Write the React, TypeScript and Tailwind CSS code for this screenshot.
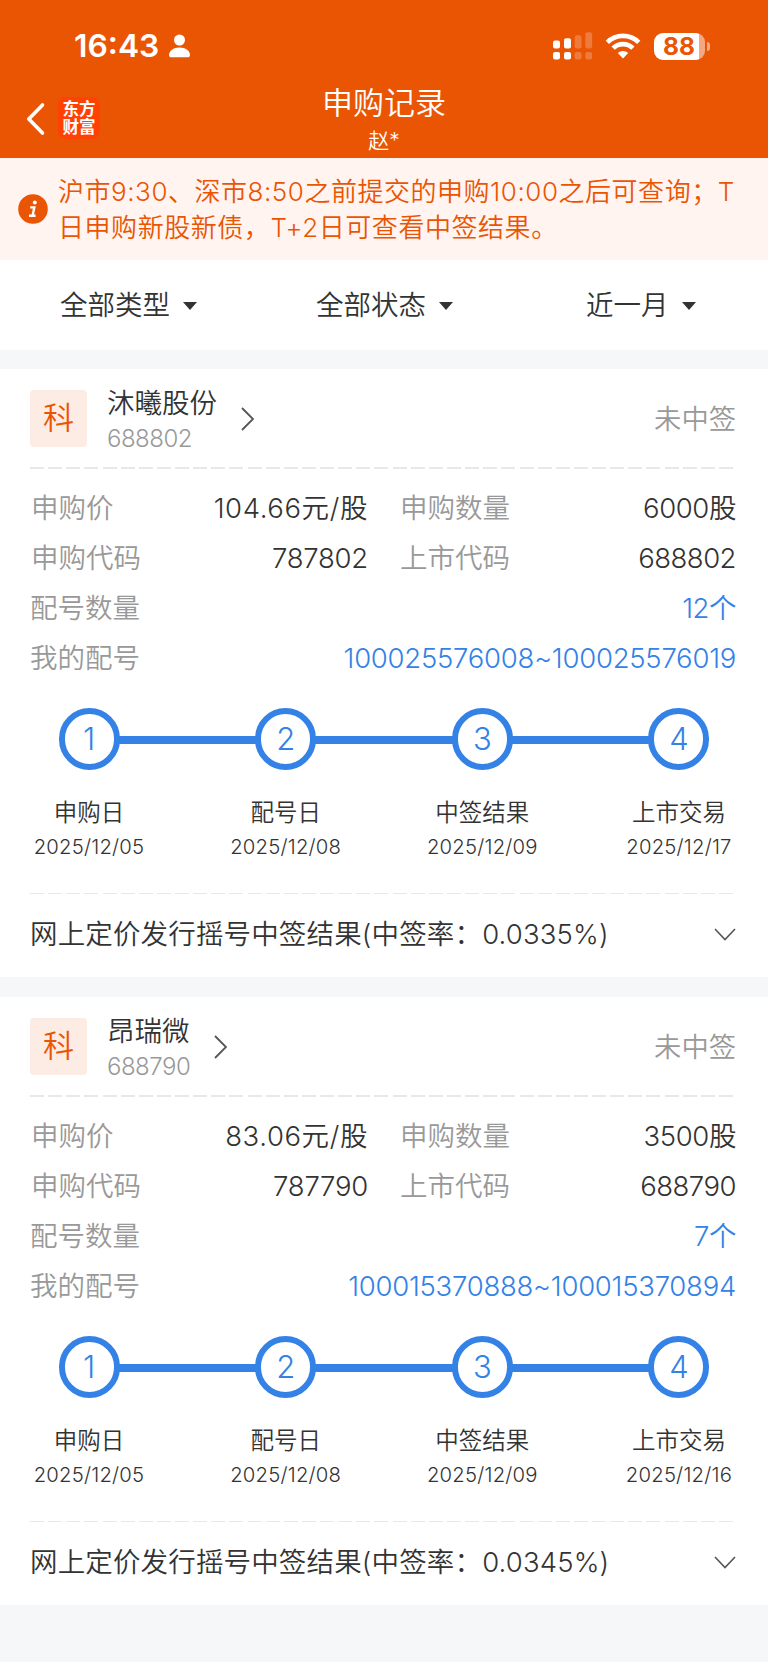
import clsx from 'clsx';

interface Step {
  label: string;
  date: string;
}

interface Subscription {
  name: string;
  code: string;
  price: string;
  quantity: string;
  applyCode: string;
  lotCount: string;
  lots: string;
  rate: string;
  steps: Step[];
}

const subscriptions: Subscription[] = [
  {
    name: '沐曦股份',
    code: '688802',
    price: '104.66元/股',
    quantity: '6000股',
    applyCode: '787802',
    lotCount: '12个',
    lots: '100025576008~100025576019',
    rate: '0.0335%',
    steps: [
      { label: '申购日', date: '2025/12/05' },
      { label: '配号日', date: '2025/12/08' },
      { label: '中签结果', date: '2025/12/09' },
      { label: '上市交易', date: '2025/12/17' },
    ],
  },
  {
    name: '昂瑞微',
    code: '688790',
    price: '83.06元/股',
    quantity: '3500股',
    applyCode: '787790',
    lotCount: '7个',
    lots: '100015370888~100015370894',
    rate: '0.0345%',
    steps: [
      { label: '申购日', date: '2025/12/05' },
      { label: '配号日', date: '2025/12/08' },
      { label: '中签结果', date: '2025/12/09' },
      { label: '上市交易', date: '2025/12/16' },
    ],
  },
];

function StatusBar() {
  return (
    <div className="flex h-[92px] items-center pl-[74px] text-white">
      <span className="w-[95px] text-[31.8px] leading-[94px] font-semibold">16:43</span>
      <svg width="22" height="24" viewBox="0 0 22 24" fill="currentColor">
        <circle cx="10.5" cy="6" r="5.5" />
        <path d="M0 21C0 17 4.5 13.5 10.5 13.5S21 17 21 21C21 22.5 20 23.3 18.5 23.3H2.5C1 23.3 0 22.5 0 21Z" />
      </svg>
      <svg className="ml-[362px]" width="40" height="28" viewBox="0 0 40 28" fill="currentColor">
        <rect x="0" y="8.5" width="7" height="8" rx="2" />
        <rect x="11" y="6.3" width="7" height="10.2" rx="2" />
        <rect x="0" y="20" width="7" height="7.5" rx="2" />
        <rect x="11" y="20" width="7" height="7.5" rx="2" />
        <g opacity="0.22">
          <rect x="21.7" y="3.3" width="6.8" height="13.2" rx="2" />
          <rect x="32.3" y="0.3" width="6.8" height="16.2" rx="2" />
          <rect x="21.7" y="20" width="6.8" height="7.5" rx="2" />
          <rect x="32.3" y="20" width="6.8" height="7.5" rx="2" />
        </g>
      </svg>
      <svg className="ml-[12px]" width="36" height="26" viewBox="0 0 36 26" fill="none" stroke="currentColor" strokeWidth="4.6">
        <path d="M2.3 9.3C11 0.7 25 0.7 33.7 9.3" />
        <path d="M8.1 15.2C13.6 9.7 22.4 9.7 27.9 15.2" />
        <path d="M18 25.5L12.8 20.1C15.6 17.3 20.4 17.3 23.2 20.1Z" fill="currentColor" stroke="none" />
      </svg>
      <div className="ml-[13px] flex h-[27px] w-[51px] items-center rounded-[9px] bg-[linear-gradient(90deg,#fff_45px,#f4a781_45px)]">
        <span className="w-[50px] text-center text-[24.5px] leading-[31px] font-bold text-[#ea5504]">88</span>
      </div>
      <div className="ml-[2px] h-[9px] w-[3px] rounded-r-full bg-[#f4a781]" />
    </div>
  );
}

function Header() {
  return (
    <header className="relative h-[158px] bg-[#ea5504] text-white">
      <StatusBar />
      <div className="absolute top-[97px] left-[26px] flex items-center">
        <svg className="mt-[2px]" width="20" height="34" viewBox="0 0 20 34" fill="none" stroke="currentColor" strokeWidth="3.6" strokeLinecap="round" strokeLinejoin="round">
          <path d="M16.5 3L2.8 17L16.5 31" />
        </svg>
        <div className="ml-[12px] flex h-[42px] w-[42px] flex-col items-center justify-center rounded-lg bg-[#ff4203] text-[16.5px] leading-[18px] font-bold">
          <span>东方</span>
          <span>财富</span>
        </div>
      </div>
      <div className="flex flex-col items-center">
        <h1 className="-mt-[9px] text-[31px] leading-[40px] font-[350]">申购记录</h1>
        <p className="mt-[4px] text-[21px] leading-[28px] font-[350]">赵*</p>
      </div>
    </header>
  );
}

function Notice() {
  return (
    <div className="flex h-[102px] items-center bg-[#fff4ef] pl-[18px] text-[#ea5504]">
      <svg width="30" height="30" viewBox="0 0 30 30">
        <circle cx="15" cy="15" r="14.8" fill="#ea5504" />
        <circle cx="16.8" cy="8.6" r="2" fill="#fff" />
        <path d="M12.2 13.4H16.3L14.6 21.4M11 21.8H17.6" fill="none" stroke="#fff" strokeWidth="2.4" />
      </svg>
      <div className="mt-[2px] ml-[10px] text-[26px] leading-[36px] font-[350] whitespace-nowrap">
        <p className="tracking-[0.53px]">沪市9:30、深市8:50之前提交的申购10:00之后可查询；T</p>
        <p className="tracking-[0.55px]">日申购新股新债，T+2日可查看中签结果。</p>
      </div>
    </div>
  );
}

function Filter({ label, className }: { label: string; className: string }) {
  return (
    <button className={clsx('flex items-center text-[27.5px] font-[350]', className)}>
      {label}
      <svg className="ml-[13px]" width="14" height="8" viewBox="0 0 14 8" fill="#333">
        <path d="M0 0H14L7 8Z" />
      </svg>
    </button>
  );
}

function Divider({ className }: { className: string }) {
  return (
    <div className={clsx('mr-[34px] ml-[30px] bg-[repeating-linear-gradient(90deg,#e8e8e8_0,#e8e8e8_14px,transparent_14px,transparent_18.13px)]', className)} />
  );
}

function StepItem({ step, index }: { step: Step; index: number }) {
  return (
    <div className="flex w-[140px] flex-col items-center">
      <div className="flex h-[62px] w-[61px] items-center justify-center rounded-full border-[6px] border-[#3482e6] bg-white text-[31px] font-light text-[#3482e6]">
        {index + 1}
      </div>
      <div className="mt-[27px] text-[23.5px] leading-[32px] font-[350]">{step.label}</div>
      <div className="mt-[2px] text-[20.3px] leading-[32px] font-[350] tracking-[0.2px]">{step.date}</div>
    </div>
  );
}

function SubscriptionCard({ item }: { item: Subscription }) {
  return (
    <section className="h-[608px] bg-white">
      <div className="flex h-[98px] items-center pr-[32px] pl-[30px]">
        <div className="flex h-[57px] w-[57px] items-center justify-center rounded bg-[#fdece3] text-[31px] font-[350] text-[#ea5504]">科</div>
        <div className="mt-[5px] ml-[20px]">
          <div className="text-[27.5px] leading-[36px] font-[350]">{item.name}</div>
          <div className="text-[24px] leading-[35px] font-[350] tracking-[-0.5px] text-[#999]">{item.code}</div>
        </div>
        <svg className="mt-[2px] ml-[24px]" width="13" height="24" viewBox="0 0 13 24" fill="none" stroke="#555" strokeWidth="1.8">
          <path d="M1 1L12 12L1 23" />
        </svg>
        <span className="mt-[4px] ml-auto text-[27.3px] font-[350] text-[#999]">未中签</span>
      </div>
      <Divider className="h-[2px]" />

      <div className="mt-[14px] pr-[32px] pl-[30px] text-[27.5px] leading-[50px] font-[350]">
        <div className="grid grid-cols-[337px_336px] gap-x-[32px] pl-px">
          <div className="flex justify-between">
            <span className="text-[#999]">申购价</span>
            <span className="tracking-[0.6px]">{item.price}</span>
          </div>
          <div className="flex justify-between">
            <span className="text-[#999]">申购数量</span>
            <span className="tracking-[-0.4px]">{item.quantity}</span>
          </div>
          <div className="flex justify-between">
            <span className="text-[#999]">申购代码</span>
            <span className="tracking-[-0.25px]">{item.applyCode}</span>
          </div>
          <div className="flex justify-between">
            <span className="text-[#999]">上市代码</span>
            <span className="tracking-[-0.5px]">{item.code}</span>
          </div>
        </div>
        <div className="flex justify-between">
          <span className="text-[#999]">配号数量</span>
          <span className="tracking-[-0.5px] text-[#3482e6]">{item.lotCount}</span>
        </div>
        <div className="flex justify-between">
          <span className="text-[#999]">我的配号</span>
          <span className="tracking-[-0.25px] text-[#3482e6]">{item.lots}</span>
        </div>
      </div>

      <div className="relative mt-[25px]">
        <div className="absolute top-[28px] left-[89px] h-[8px] w-[590px] bg-[#3482e6]" />
        <div className="relative flex justify-between px-[19px]">
          {item.steps.map((step, index) => (
            <StepItem key={step.label} step={step} index={index} />
          ))}
        </div>
      </div>

      <Divider className="mt-[30px] h-px" />
      <div className="flex h-[81px] items-center justify-between pr-[32px] pl-[30px]">
        <span className="text-[27.5px] font-[350] tracking-[0.15px]">网上定价发行摇号中签结果(中签率：{item.rate})</span>
        <svg width="22" height="13" viewBox="0 0 22 13" fill="none" stroke="#555" strokeWidth="1.6">
          <path d="M1 1L11 11.5L21 1" />
        </svg>
      </div>
    </section>
  );
}

export default function App() {
  return (
    <div className="h-[1662px] w-[768px] overflow-hidden bg-[#f6f7f9] font-['Inter','Noto_Sans_CJK_SC',sans-serif] text-[#333]">
      <Header />
      <Notice />
      <nav className="flex h-[90px] items-center bg-white pt-[2px]">
        <Filter label="全部类型" className="ml-[60px]" />
        <Filter label="全部状态" className="ml-[119px]" />
        <Filter label="近一月" className="ml-[133px]" />
      </nav>
      <main className="mt-[19px] flex flex-col gap-[20px]">
        {subscriptions.map((item) => (
          <SubscriptionCard key={item.code} item={item} />
        ))}
      </main>
    </div>
  );
}
